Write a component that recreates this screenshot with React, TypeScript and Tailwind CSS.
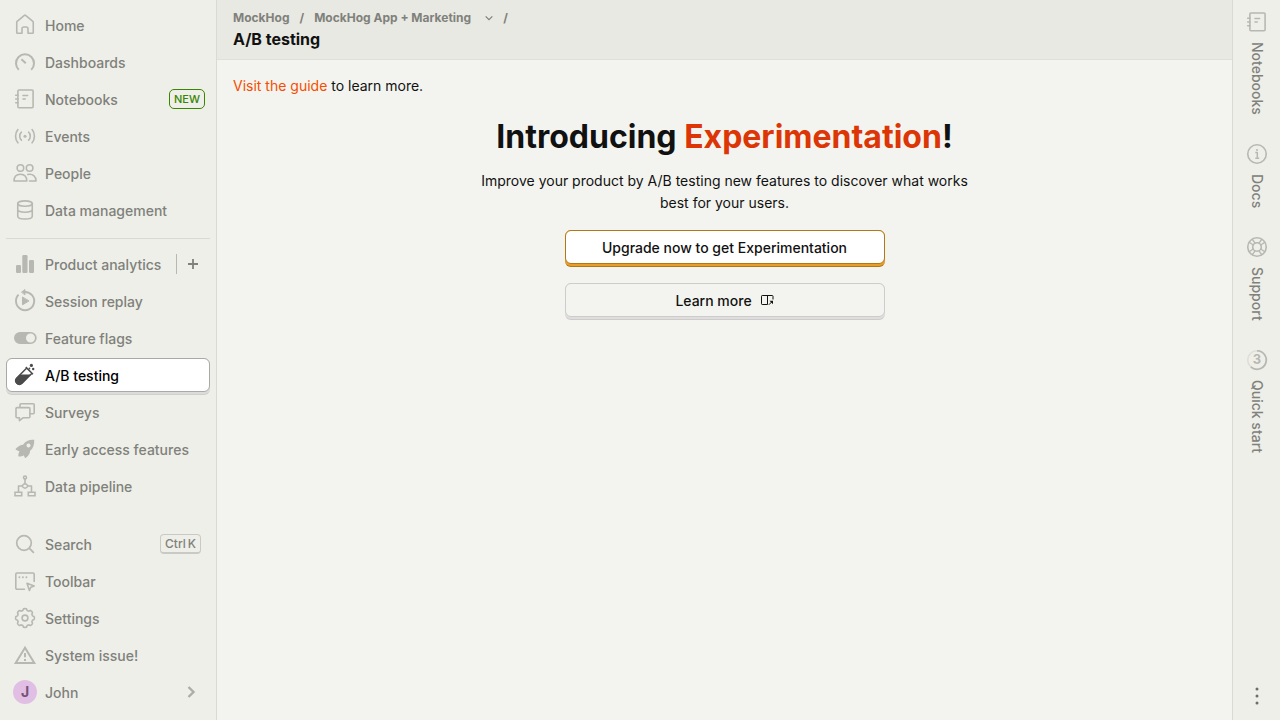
import type { ReactNode } from "react";

function Icon({ children, className = "" }: { children: ReactNode; className?: string }) {
  return (
    <svg
      viewBox="0 0 24 24"
      aria-hidden="true"
      className={`size-6 shrink-0 ${className}`}
      fill="none"
      stroke="currentColor"
      strokeWidth="1.6"
      strokeLinecap="round"
      strokeLinejoin="round"
    >
      {children}
    </svg>
  );
}

const gearPath =
  Array.from({ length: 128 }, (_, i) => {
    const angle = (i / 128) * Math.PI * 2;
    const wave = Math.cos(angle * 8);
    const radius = 8.55 + 0.8 * Math.tanh(2.6 * (wave + 0.15));
    const x = (12 + radius * Math.sin(angle)).toFixed(2);
    const y = (12 - radius * Math.cos(angle)).toFixed(2);
    return `${i === 0 ? "M" : "L"}${x} ${y}`;
  }).join("") + "Z";

const HomeIcon = () => (
  <Icon>
    <path d="M3.75 9.2v10.3c0 .4.35.75.75.75H9V15.8c0-1 .7-1.8 1.8-1.8h2.4c1.1 0 1.8.8 1.8 1.8v4.45h4.5c.4 0 .75-.35.75-.75V9.2c0-.4-.1-.6-.4-.9L12.6 2.3c-.35-.3-.85-.3-1.2 0L4.15 8.3c-.3.3-.4.5-.4.9Z" />
  </Icon>
);
const DashboardIcon = () => (
  <Icon>
    <path strokeWidth="2" strokeLinecap="butt" d="M5.8 19.8a9 9 0 1 1 12.4 0" />
    <path strokeWidth="2" strokeLinecap="butt" d="m8.4 9.3 4.4 4" />
  </Icon>
);
const NotebookIcon = () => (
  <Icon>
    <rect x="4.9" y="3" width="15.2" height="17.75" rx="1" />
    <path d="M10 8.5h4.6M10 12h2.2M2.7 8.3H5M2.7 12H5M2.7 15.7H5" />
  </Icon>
);
const EventsIcon = () => (
  <Icon>
    <circle cx="12" cy="12.2" r="1.5" fill="currentColor" stroke="none" />
    <path d="M8.4 8.2c-2.2 2-2.2 6 0 8M15.6 8.2c2.2 2 2.2 6 0 8M4.9 5.6c-3.1 3.7-3.1 9.5 0 13.2M19.1 5.6c3.1 3.7 3.1 9.5 0 13.2" />
  </Icon>
);
const PeopleIcon = () => (
  <Icon>
    <circle cx="7.4" cy="7" r="3.3" />
    <circle cx="16.6" cy="7" r="3.3" />
    <path d="M1 20c0-4.2 2.5-6.8 6.4-6.8s6.4 2.6 6.4 6.8ZM14.8 13.5c5-1 8.2 1.8 8.2 6.5h-6.5" />
  </Icon>
);
const DatabaseIcon = () => (
  <Icon>
    <ellipse cx="12" cy="5.6" rx="7.25" ry="2.7" />
    <path d="M4.75 5.6v12.6c0 1.6 3 2.8 7.25 2.8s7.25-1.2 7.25-2.8V5.6M4.75 11.6c0 1.6 3 2.6 7.25 2.6s7.25-1 7.25-2.6" />
  </Icon>
);
const AnalyticsIcon = () => (
  <Icon>
    <g fill="currentColor" stroke="none">
      <rect x="3" y="13" width="5" height="8" rx="1.3" />
      <rect x="9.3" y="3" width="5.2" height="18" rx="1.3" />
      <rect x="16" y="8" width="5" height="13" rx="1.3" />
    </g>
  </Icon>
);
const ReplayIcon = () => (
  <Icon>
    <path strokeWidth="1.9" strokeLinecap="butt" d="M11.5 3A9.1 9.1 0 1 1 5.6 5.7" />
    <path fill="currentColor" strokeWidth=".8" d="M8.7 3 12 .4v5.2Z" />
    <path fill="currentColor" strokeWidth="1" d="M9.5 8.4v7.4l6.2-3.7Z" />
  </Icon>
);
const ToggleIcon = () => (
  <Icon>
    <path
      fill="currentColor"
      fillRule="evenodd"
      stroke="none"
      d="M7 6h10.700a6 6 0 0 1 0 12H7A6 6 0 0 1 7 6Zm10.500 1.500a4.500 4.500 0 1 0 0 9 4.500 4.500 0 0 0 0-9Z"
    />
  </Icon>
);
const TestTubeIcon = () => (
  <Icon>
    <path strokeWidth="1.5" strokeLinecap="butt" d="M13.7 5 3.6 15.2a3.7 3.7 0 0 0 5.2 5.2L19 10.2M12.8 4.1l7.2 7.1" />
    <path fill="currentColor" stroke="none" d="M6.8 11.6h10.900l-8.500 8.900a3.800 3.800 0 0 1-5.900-5.400Z" />
    <circle cx="18.4" cy="2.4" r="1.6" fill="currentColor" stroke="none" />
    <circle cx="16.4" cy="5.5" r=".9" fill="currentColor" stroke="none" />
    <circle cx="20.2" cy="6" r="1.2" fill="currentColor" stroke="none" />
  </Icon>
);
const SurveysIcon = () => (
  <Icon>
    <path d="M7 7V4.8c0-.6.4-1 1-1h12.2c.6 0 1 .4 1 1v7.9c0 .6-.4 1-1 1H17" />
    <path d="M4 7.6h11.9c.6 0 1 .4 1 1v8.2c0 .6-.4 1-1 1H10l-3.600 2.800v-2.800H4c-.6 0-1-.4-1-1V8.600c0-.6.4-1 1-1Z" />
  </Icon>
);
const RocketIcon = () => (
  <Icon>
    <path
      fill="currentColor"
      fillRule="evenodd"
      stroke="none"
      d="M21.2 2.8c.3 4.600-.8 8.300-4.200 11.300.2 2.700-1.800 5.300-4.400 6.900-.3.200-.6 0-.7-.3l-1.200-2.500c-1.200 1-2.800 1.300-4.600 1.400-.6.100-.9-.2-.8-.8.1-1.500.3-3.100 1.200-4.300l-3.600-1.800c-.4-.2-.5-.6-.2-.9C4.900 9.600 7.300 7.800 10 7.800c2.700-3.800 6.500-5.500 11.200-5ZM15.500 6.500a2 2 0 1 0 0 4 2 2 0 0 0 0-4Z"
    />
  </Icon>
);
const PipelineIcon = () => (
  <Icon>
    <circle cx="12" cy="3.5" r="1.5" />
    <path d="M12 5v4M9 12H5.5v6M15 12h3.5v6M8.8 12c1.2-1.3 2.3-2.4 3.2-2.4s2 1.1 3.2 2.4c-1.2 1.3-2.3 2.2-3.2 2.2S10 13.3 8.8 12Z" />
    <path strokeLinejoin="miter" d="M2 18.3h6.7v3.4H2ZM15.3 18.3H22v3.4h-6.700Z" />
  </Icon>
);
const SearchIcon = () => (
  <Icon>
    <circle cx="11" cy="11" r="7.3" strokeWidth="1.7" />
    <path strokeWidth="1.8" d="m16.4 16.4 4 4" />
  </Icon>
);
const ToolbarIcon = () => (
  <Icon>
    <path d="M11.5 20.2H4c-.7 0-1.2-.5-1.2-1.2V5.2C2.8 4.5 3.3 4 4 4h16c.7 0 1.2.5 1.2 1.2v7.3M14 14.2l7.2 2.7-3.400 1.300-1.400 3.300Z" />
    <path strokeWidth="1.9" d="M6.4 8.3h.01M9.9 8.3h.01M13.4 8.3h.01" />
  </Icon>
);
const SettingsIcon = () => (
  <Icon>
    <path d={gearPath} />
    <circle cx="12" cy="12" r="2.9" />
  </Icon>
);
const WarningIcon = () => (
  <Icon>
    <path strokeWidth="2" strokeLinejoin="miter" strokeLinecap="butt" d="M12 4.7 2.7 20h18.600ZM12 10v4.3M12 16v2" />
  </Icon>
);
const InfoIcon = () => (
  <Icon>
    <circle cx="12" cy="12" r="9.25" />
    <path strokeLinecap="butt" d="M10.3 10.6h2v6.200M10.300 16.300h3.900M12 7v2" strokeWidth="1.5" />
  </Icon>
);
const SupportIcon = () => (
  <Icon>
    <circle cx="12" cy="12" r="9.25" />
    <circle cx="12" cy="12" r="4.3" />
    <path
      d="M10 8.2 7.2 4.2M8.2 10 4.2 7.2M14 8.2l2.8-4M15.8 10l4-2.8M10 15.8l-2.8 4M8.2 14l-4 2.8M14 15.8l2.8 4M15.8 14l4 2.8"
      strokeWidth="1.4"
    />
  </Icon>
);
const ProgressIcon = () => (
  <span className="relative flex size-6 shrink-0 items-center justify-center text-[13px] font-bold">
    <Icon className="absolute inset-0">
      <circle cx="12" cy="12" r="9.25" opacity=".3" />
      <path strokeWidth="1.7" strokeLinecap="butt" d="M12 2.75a9.25 9.25 0 1 1-6.2 16.1" />
    </Icon>
    <span>3</span>
  </span>
);
const Chevron = ({ className, weight }: { className: string; weight: number }) => (
  <svg viewBox="0 0 12 12" aria-hidden="true" className={className} fill="none" stroke="currentColor">
    <path d="m3.5 1 5 5-5 5" strokeWidth={weight} />
  </svg>
);

function NavItem({
  icon,
  label,
  active = false,
  children,
}: {
  icon: ReactNode;
  label: string;
  active?: boolean;
  children?: ReactNode;
}) {
  return (
    <li className={active ? "rounded-md border-b border-[#cfcfcc] bg-[#dcdcda] pb-0.5" : "pb-[3px]"}>
      <a
        href="#"
        aria-current={active ? "page" : undefined}
        className={
          active
            ? "flex h-[34px] items-center gap-2 rounded-md border border-[#a9a9a7] bg-white px-1.5 text-black"
            : "flex h-[34px] items-center gap-2 rounded-md border border-transparent px-1.5 text-[#80817b]"
        }
      >
        <span className={active ? "text-[#4b4b4b]" : "text-[#b7b8b2]"}>{icon}</span>
        <span className="pt-px">{label}</span>
        {children}
      </a>
    </li>
  );
}

function SideTab({ icon, label }: { icon: ReactNode; label: string }) {
  return (
    <button className="flex flex-col items-center gap-2 text-[#80817b]">
      <span className="text-[#b7b8b2]">{icon}</span>
      <span className="leading-5 [writing-mode:vertical-rl]">{label}</span>
    </button>
  );
}

export default function App() {
  return (
    <div className="flex min-h-screen bg-[#f3f4ef] font-['Inter',sans-serif] text-sm text-[#111]">
      <nav className="flex w-[217px] shrink-0 flex-col border-r border-[#d9dad3] bg-[#eeefe9] px-1.5 py-2 font-medium">
        <ul>
          <NavItem icon={<HomeIcon />} label="Home" />
          <NavItem icon={<DashboardIcon />} label="Dashboards" />
          <NavItem icon={<NotebookIcon />} label="Notebooks">
            <span className="-mr-0.5 ml-auto flex h-5 items-center rounded-[5px] border border-[#388600] px-1 pt-px text-[11px] text-[#388600]">
              NEW
            </span>
          </NavItem>
          <NavItem icon={<EventsIcon />} label="Events" />
          <NavItem icon={<PeopleIcon />} label="People" />
          <NavItem icon={<DatabaseIcon />} label="Data management" />
        </ul>
        <hr className="my-2 border-[#d9dad3]" />
        <ul>
          <li className="flex h-[37px] items-center pb-[3px] text-[#80817b]">
            <a href="#" className="flex flex-1 items-center gap-2 pl-[7px]">
              <span className="text-[#b7b8b2]">
                <AnalyticsIcon />
              </span>
              <span className="pt-px">Product analytics</span>
            </a>
            <button
              aria-label="New insight"
              className="flex h-5 w-[34px] items-center justify-center border-l border-[#b7b8b2] pr-0.5"
            >
              <svg viewBox="0 0 12 12" className="size-3" stroke="currentColor" strokeWidth="1.8" aria-hidden="true">
                <path d="M6 1v10M1 6h10" />
              </svg>
            </button>
          </li>
          <NavItem icon={<ReplayIcon />} label="Session replay" />
          <NavItem icon={<ToggleIcon />} label="Feature flags" />
          <NavItem icon={<TestTubeIcon />} label="A/B testing" active />
          <NavItem icon={<SurveysIcon />} label="Surveys" />
          <NavItem icon={<RocketIcon />} label="Early access features" />
          <NavItem icon={<PipelineIcon />} label="Data pipeline" />
        </ul>
        <ul className="mt-auto">
          <NavItem icon={<SearchIcon />} label="Search">
            <kbd className="mr-0.5 ml-auto flex h-5 items-center gap-0.5 rounded-sm border border-b-2 border-[#c9cac5] px-1 font-['Inter',sans-serif] text-xs">
              <span>Ctrl</span>
              <span>K</span>
            </kbd>
          </NavItem>
          <NavItem icon={<ToolbarIcon />} label="Toolbar" />
          <NavItem icon={<SettingsIcon />} label="Settings" />
          <NavItem icon={<WarningIcon />} label="System issue!" />
          <NavItem
            icon={
              <span className="flex size-6 items-center justify-center rounded-full bg-[#e1bfe4] font-bold text-[#76527a]">
                J
              </span>
            }
            label="John"
          >
            <Chevron className="mr-1.5 ml-auto size-3 text-[#adaea8]" weight={2.4} />
          </NavItem>
        </ul>
      </nav>

      <main className="min-w-0 flex-1">
        <header className="h-[60px] border-b border-[#dfe0da] bg-[#e8e9e3] px-4 pt-2">
          <nav aria-label="Breadcrumb" className="flex h-5 items-center gap-2.5 text-xs font-bold text-[#80817b]">
            <a href="#">MockHog</a>
            <span>/</span>
            <button className="flex items-center gap-3.5">
              MockHog App + Marketing
              <Chevron className="size-2 rotate-90" weight={1.8} />
            </button>
            <span>/</span>
          </nav>
          <h1 className="text-base leading-[22px] font-bold">A/B testing</h1>
        </header>
        <div className="px-4 pt-4">
          <p className="leading-5">
            <a href="#" className="text-[#f54e00]">
              Visit the guide
            </a>{" "}
            to learn more.
          </p>
          <section className="mx-auto flex max-w-lg flex-col items-center pt-5 text-center">
            <h2 className="text-[32px] leading-[42px] font-bold">
              Introducing <span className="text-[#dc3606]">Experimentation</span>!
            </h2>
            <p className="pt-3 leading-[22px]">
              Improve your product by A/B testing new features to discover what works best for your users.
            </p>
            <button className="mt-4 w-80 rounded-md border-b border-[#b17816] bg-[#eb9d2a] pb-0.5 font-medium">
              <span className="flex h-[34px] items-center justify-center rounded-md border border-[#b17816] bg-white pt-px">
                Upgrade now to get Experimentation
              </span>
            </button>
            <a href="#" className="mt-4 w-80 rounded-md border-b border-[#cccccc] bg-[#e1dddd] pb-0.5 font-medium">
              <span className="flex h-[34px] items-center justify-center gap-2 rounded-md border border-[#cccccc] bg-[#f3f4ef] pt-px">
                Learn more
                <svg viewBox="0 0 14 14" className="size-3.5" fill="none" stroke="currentColor" aria-hidden="true">
                  <path d="M7.5 1.5v9H2.2a.7.7 0 0 1-.7-.7V2.2c0-.4.3-.7.7-.7h10.100c.4 0 .7.3.7.7v3.300M8.800 10.800l2.800-2.800" />
                  <path fill="currentColor" stroke="none" d="M9.500 6.800H13v3.500Z" />
                </svg>
              </span>
            </a>
          </section>
        </div>
      </main>

      <aside className="flex w-12 shrink-0 flex-col items-center border-l border-[#d9dad3] bg-[#eeefe9] pt-2.5 pb-3 pl-px font-medium">
        <div className="flex flex-col gap-[27px]">
          <SideTab icon={<NotebookIcon />} label="Notebooks" />
          <SideTab icon={<InfoIcon />} label="Docs" />
          <SideTab icon={<SupportIcon />} label="Support" />
          <SideTab icon={<ProgressIcon />} label="Quick start" />
        </div>
        <button aria-label="More options" className="mt-auto text-[#6d6e69]">
          <svg viewBox="0 0 24 24" className="size-6" fill="currentColor" aria-hidden="true">
            <circle cx="12" cy="5" r="1.5" />
            <circle cx="12" cy="12" r="1.5" />
            <circle cx="12" cy="19" r="1.5" />
          </svg>
        </button>
      </aside>
    </div>
  );
}
